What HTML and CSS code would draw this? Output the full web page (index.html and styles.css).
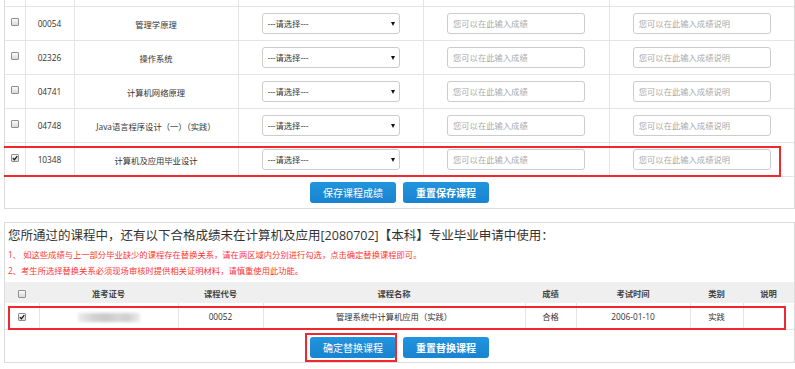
FILE: index.html
```html
<!DOCTYPE html>
<html lang="zh-CN">
<head>
    <meta charset="UTF-8">
    <title>毕业申请 - 课程成绩</title>
    <link rel="stylesheet" href="styles.css">
</head>
<body>
<div class="page">
    <div class="panel first">
        <table class="grade">
            <colgroup>
                <col class="c-chk"><col class="c-code"><col class="c-name"><col class="c-sel"><col class="c-score"><col>
            </colgroup>
            <tr class="cut"><td></td><td></td><td></td><td></td><td></td><td></td></tr>
            <tr>
                <td><span class="chk"></span></td>
                <td>00054</td>
                <td>管理学原理</td>
                <td><div class="sel"><select><option>---请选择---</option></select></div></td>
                <td><input type="text" placeholder="您可以在此输入成绩"></td>
                <td><input type="text" placeholder="您可以在此输入成绩说明"></td>
            </tr>
            <tr>
                <td><span class="chk"></span></td>
                <td>02326</td>
                <td>操作系统</td>
                <td><div class="sel"><select><option>---请选择---</option></select></div></td>
                <td><input type="text" placeholder="您可以在此输入成绩"></td>
                <td><input type="text" placeholder="您可以在此输入成绩说明"></td>
            </tr>
            <tr>
                <td><span class="chk"></span></td>
                <td>04741</td>
                <td>计算机网络原理</td>
                <td><div class="sel"><select><option>---请选择---</option></select></div></td>
                <td><input type="text" placeholder="您可以在此输入成绩"></td>
                <td><input type="text" placeholder="您可以在此输入成绩说明"></td>
            </tr>
            <tr>
                <td><span class="chk"></span></td>
                <td>04748</td>
                <td>Java语言程序设计（一）（实践）</td>
                <td><div class="sel"><select><option>---请选择---</option></select></div></td>
                <td><input type="text" placeholder="您可以在此输入成绩"></td>
                <td><input type="text" placeholder="您可以在此输入成绩说明"></td>
            </tr>
            <tr>
                <td><span class="chk"><svg viewBox="0 0 6 6"><path d="M0.8 3.1 L2.4 4.7 L5.3 1.2" /></svg></span></td>
                <td>10348</td>
                <td>计算机及应用毕业设计</td>
                <td><div class="sel"><select><option>---请选择---</option></select></div></td>
                <td><input type="text" placeholder="您可以在此输入成绩"></td>
                <td><input type="text" placeholder="您可以在此输入成绩说明"></td>
            </tr>
        </table>
        <div class="btns">
            <button class="btn">保存课程成绩</button>
            <button class="btn reset">重置保存课程</button>
        </div>
    </div>

    <div class="panel">
        <h3 class="title">您所通过的课程中，还有以下合格成绩未在计算机及应用[2080702]【本科】专业毕业申请中使用：</h3>
        <div class="tips">
            <p>1、 如这些成绩与上一部分毕业缺少的课程存在替换关系，请在两区域内分别进行勾选，点击确定替换课程即可。</p>
            <p>2、考生所选择替换关系必须现场审核时提供相关证明材料，请慎重使用此功能。</p>
        </div>
        <table class="sub">
            <colgroup>
                <col class="s-chk"><col class="s-no"><col class="s-code"><col class="s-name"><col class="s-score"><col class="s-date"><col class="s-type"><col>
            </colgroup>
            <tr>
                <th><span class="chk"></span></th>
                <th>准考证号</th>
                <th>课程代号</th>
                <th>课程名称</th>
                <th>成绩</th>
                <th>考试时间</th>
                <th>类别</th>
                <th>说明</th>
            </tr>
            <tr>
                <td><span class="chk"><svg viewBox="0 0 6 6"><path d="M0.8 3.1 L2.4 4.7 L5.3 1.2" /></svg></span></td>
                <td><span class="blur"></span></td>
                <td>00052</td>
                <td>管理系统中计算机应用（实践）</td>
                <td>合格</td>
                <td>2006-01-10</td>
                <td>实践</td>
                <td></td>
            </tr>
        </table>
        <div class="btns bottom">
            <button class="btn">确定替换课程</button>
            <button class="btn reset">重置替换课程</button>
        </div>
    </div>

    <div class="mark mark-row"></div>
    <div class="mark mark-sub"></div>
    <div class="mark mark-btn"></div>
</div>
</body>
</html>
```

FILE: styles.css
```css
body {
    margin: 0 0 0 4px;
    background-color: #fff;
    font-family: "Open Sans", "Noto Sans CJK SC", sans-serif;
    font-size: 8.3px;
    color: #333;
    overflow: hidden;
}

.page {
    position: relative;
}

.panel {
    border: 1px solid #dcdcdc;
    background-color: #fff;
}

.panel.first {
    border-top: 0;
}

.panel + .panel {
    margin-top: 13px;
}

table {
    width: 100%;
    border-collapse: collapse;
    table-layout: fixed;
}

/* upper table: courses still missing */
.c-chk { width: 20px; }
.c-code { width: 49px; }
.c-name { width: 164px; }
.c-sel { width: 185px; }
.c-score { width: 186px; }

.grade td {
    height: 33px;
    padding: 0;
    text-align: center;
    border-bottom: 1px solid #e4e4e4;
    border-left: 1px solid #e4e4e4;
}

.grade td:first-child {
    border-left: 0;
}

.grade .cut td {
    height: 6px;
}

.grade .chk {
    margin-bottom: 4px;
}

.chk {
    display: inline-block;
    box-sizing: border-box;
    width: 8px;
    height: 8px;
    border: 1px solid #8f8f8f;
    border-radius: 1px;
    background: linear-gradient(#fbfbfb, #d9d9d9);
    vertical-align: middle;
}

.chk svg {
    display: block;
    width: 6px;
    height: 6px;
}

.chk path {
    fill: none;
    stroke: #1a1a1a;
    stroke-width: 1.3;
}

.sel {
    display: inline-block;
    position: relative;
    width: 138px;
    vertical-align: middle;
}

.sel select {
    appearance: none;
    display: block;
    width: 100%;
    height: 21px;
    margin: 0;
    padding: 0 5px;
    border: 1px solid #ccc;
    border-radius: 3px;
    background-color: #fff;
    font: inherit;
    color: #333;
}

.sel::after {
    content: "";
    position: absolute;
    right: 5px;
    top: 9px;
    border-left: 2.5px solid transparent;
    border-right: 2.5px solid transparent;
    border-top: 4px solid #111;
}

.grade input[type="text"] {
    box-sizing: border-box;
    width: 138px;
    height: 21px;
    margin: 0;
    padding: 0 5px;
    border: 1px solid #ccc;
    border-radius: 3px;
    font: inherit;
    color: #333;
    vertical-align: middle;
}

input::placeholder {
    color: #aaa;
}

.btns {
    display: flex;
    justify-content: center;
    gap: 7px;
    padding: 5px 0;
}

.btns.bottom {
    padding: 7px 0 4px;
}

.btn {
    width: 86px;
    height: 21px;
    padding: 0;
    border: 0;
    border-radius: 3px;
    background: linear-gradient(#2294de, #1983d0);
    color: #fff;
    font-family: inherit;
    font-size: 10px;
    cursor: pointer;
}

.btn.reset {
    font-weight: bold;
}

/* lower part: passed courses not used */
.title {
    margin: 0;
    padding: 4px 3px 2px;
    font-size: 12.5px;
    font-weight: normal;
    line-height: 18px;
    color: #333;
}

.tips {
    padding: 0 3px;
    margin-bottom: 4px;
    color: #f33;
}

.tips p {
    margin: 0;
    line-height: 15.5px;
}

.s-chk { width: 34px; }
.s-no { width: 139px; }
.s-code { width: 85px; }
.s-name { width: 262px; }
.s-score { width: 51px; }
.s-date { width: 114px; }
.s-type { width: 53px; }

.sub th {
    height: 21px;
    padding: 0;
    background-color: #efefef;
    font-weight: bold;
    color: #444;
}

.sub td {
    height: 26px;
    padding: 0;
    text-align: center;
    border-bottom: 1px solid #e4e4e4;
    border-left: 1px solid #e4e4e4;
}

.sub td:first-child {
    border-left: 0;
}

.blur {
    display: inline-block;
    width: 62px;
    height: 9px;
    background: linear-gradient(90deg, #ececec, #d2d2d2 25%, #c9c9c9 45%, #d6d6d6 65%, #cfcfcf 80%, #ededed);
    filter: blur(1.5px);
    vertical-align: middle;
}

/* red annotation frames */
.mark {
    position: absolute;
    box-sizing: border-box;
    border: 2px solid #f0282d;
}

.mark-row {
    left: -4px;
    top: 146px;
    width: 781px;
    height: 31px;
}

.mark-sub {
    left: 4px;
    top: 306px;
    width: 778px;
    height: 24px;
}

.mark-btn {
    left: 301px;
    top: 333px;
    width: 92px;
    height: 29px;
}
```
